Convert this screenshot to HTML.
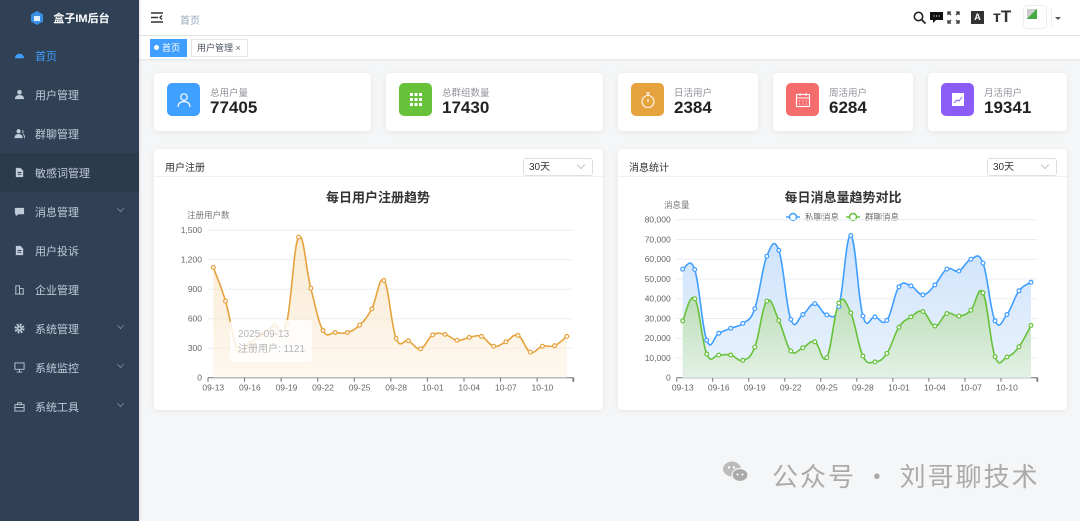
<!DOCTYPE html>
<html><head><meta charset="utf-8">
<style>
*{box-sizing:border-box;margin:0;padding:0}
body{width:1080px;height:521px;overflow:hidden;font-family:"Liberation Sans","Noto Sans CJK SC",sans-serif;background:#f5f6f7;position:relative}
.side{position:absolute;left:0;top:0;width:139px;height:521px;background:#304156;color:#bfcbd9;font-size:11px}
.logo{height:36px;display:flex;align-items:center;justify-content:center;color:#fff;font-weight:bold;font-size:11px;gap:8px}
.item{position:absolute;left:0;width:139px;height:39px;display:flex;align-items:center;padding-left:14px}
.item svg{width:11px;height:11px;margin-right:10px}
.item .ar{position:absolute;right:15px;top:13px;width:7px;height:7px;border-right:1px solid #8a97a8;border-bottom:1px solid #8a97a8;transform:rotate(45deg) scale(.7)}
.top{position:absolute;left:139px;top:0;right:0;height:36px;background:#fff;border-bottom:1px solid #e6e6e6}
.tags{position:absolute;left:139px;top:36px;right:0;height:23px;background:#fff;box-shadow:0 1px 3px rgba(0,0,0,.08)}
.card{position:absolute;top:73px;height:58px;background:#fff;border-radius:4px;box-shadow:0 1px 6px rgba(0,0,0,.07)}
.card .ic{position:absolute;left:13px;top:10px;width:33px;height:33px;border-radius:5px;display:flex;align-items:center;justify-content:center}
.card .lb{position:absolute;left:56px;top:12px;font-size:9.5px;color:#909399}
.card .v{position:absolute;left:56px;top:25px;font-size:17px;font-weight:bold;color:#222}
.panel{position:absolute;top:149px;width:449px;height:261px;background:#fff;border-radius:4px;box-shadow:0 1px 6px rgba(0,0,0,.07)}
.ph{height:28px;border-bottom:1px solid #f0f0f0;font-size:10px;color:#333;padding:10px 0 0 11px}
.sel{position:absolute;top:9px;width:70px;height:18px;border:1px solid #dcdfe6;border-radius:3px;font-size:10px;color:#333;padding:1px 0 0 5px;line-height:15px}
.sel:after{content:"";position:absolute;right:8px;top:3px;width:5px;height:5px;border-right:1px solid #c0c4cc;border-bottom:1px solid #c0c4cc;transform:rotate(45deg)}
svg text{font-family:"Liberation Sans","Noto Sans CJK SC",sans-serif}
</style></head><body>
<div class="side">
 <div class="logo"><svg width="16" height="16" viewBox="0 0 16 16"><path d="M8 1L14 4.5V11.5L8 15L2 11.5V4.5Z" fill="#3a8ee6"/><path d="M5 6h6v5H5z" fill="#fff" opacity=".85"/></svg>盒子IM后台</div>
 <div class="item" style="top:36px;color:#409eff"><svg viewBox="0 0 12 12"><path d="M1 9a5 5 0 0 1 10 0z" fill="#409eff"/></svg>首页</div>
 <div class="item" style="top:75px"><svg viewBox="0 0 12 12"><circle cx="6" cy="3.5" r="2.5" fill="#bfcbd9"/><path d="M1 11c0-3 2-4.5 5-4.5s5 1.5 5 4.5z" fill="#bfcbd9"/></svg>用户管理</div>
 <div class="item" style="top:114px"><svg viewBox="0 0 12 12"><circle cx="5" cy="3.5" r="2.3" fill="#bfcbd9"/><path d="M0.5 11c0-3 2-4.5 4.5-4.5s4.5 1.5 4.5 4.5z" fill="#bfcbd9"/><path d="M9 2.5a2 2 0 0 1 0 3.5M10 7c1 .5 1.5 2 1.5 4" stroke="#bfcbd9" fill="none"/></svg>群聊管理</div>
 <div class="item" style="top:153px;background:#2b3a4d"><svg viewBox="0 0 12 12"><path d="M2 1h5l3 3v7H2z" fill="#bfcbd9"/><path d="M4 6h4M4 8h4" stroke="#2b3a4d"/></svg>敏感词管理</div>
 <div class="item" style="top:192px"><svg viewBox="0 0 12 12"><path d="M1 2h10v7H5l-3 2V9H1z" fill="#bfcbd9"/></svg>消息管理<span class="ar"></span></div>
 <div class="item" style="top:231px"><svg viewBox="0 0 12 12"><path d="M2 1h5l3 3v7H2z" fill="#bfcbd9"/><path d="M4 6h4M4 8h4" stroke="#304156"/></svg>用户投诉</div>
 <div class="item" style="top:270px"><svg viewBox="0 0 12 12"><path d="M2 11V2h4v9M6 5h4v6M1 11h10" stroke="#bfcbd9" fill="none"/></svg>企业管理</div>
 <div class="item" style="top:309px"><svg viewBox="0 0 12 12"><circle cx="6" cy="6" r="4.3" fill="none" stroke="#bfcbd9" stroke-width="2.4" stroke-dasharray="2 1.4"/><circle cx="6" cy="6" r="3" fill="#bfcbd9"/><circle cx="6" cy="6" r="1.2" fill="#304156"/></svg>系统管理<span class="ar"></span></div>
 <div class="item" style="top:348px"><svg viewBox="0 0 12 12"><path d="M1 1h10v7H1zM6 8v3M3 11h6" stroke="#bfcbd9" fill="none"/></svg>系统监控<span class="ar"></span></div>
 <div class="item" style="top:387px"><svg viewBox="0 0 12 12"><path d="M1 4h10v7H1zM4 4V2h4v2M1 7h10" stroke="#bfcbd9" fill="none"/></svg>系统工具<span class="ar"></span></div>
</div>
<div class="top">
 <svg style="position:absolute;left:12px;top:12px" width="12" height="11" viewBox="0 0 12 11"><path d="M0 1h12M0 5.5h7M0 10h12M11 3.5l-2 2 2 2" stroke="#333" stroke-width="1.4" fill="none"/></svg>
 <span style="position:absolute;left:41px;top:12px;font-size:10px;color:#97a8be">首页</span>
 <svg style="position:absolute;left:774px;top:11px" width="14" height="14" viewBox="0 0 14 14"><circle cx="5.5" cy="5.5" r="4.2" stroke="#222" stroke-width="1.6" fill="none"/><path d="M8.5 8.5l4 4" stroke="#222" stroke-width="1.8"/></svg>
 <svg style="position:absolute;left:791px;top:11px" width="13" height="13" viewBox="0 0 13 13"><path d="M0 1h13v8H6l-3 3V9H0z" fill="#111"/><path d="M3.5 5h1M6 5h1M8.5 5h1" stroke="#fff"/></svg>
 <svg style="position:absolute;left:808px;top:11px" width="13" height="13" viewBox="0 0 13 13"><path d="M1 4V1h3M9 1h3v3M12 9v3H9M4 12H1V9M1 1l3 3M12 1L9 4M12 12L9 9M1 12l3-3" stroke="#333" stroke-width="1.3" fill="none"/></svg>
 <div style="position:absolute;left:832px;top:11px;width:13px;height:13px;background:#333;color:#fff;font-size:9px;font-weight:bold;line-height:13px;text-align:center">A</div>
 <span style="position:absolute;left:854px;top:7px;font-size:16px;color:#333;font-weight:bold">т<span style="font-size:17px">T</span></span>
 <div style="position:absolute;left:884px;top:5px;width:24px;height:24px;border:1px solid #eee;border-radius:4px;background:#fff"><div style="margin:3px 0 0 3px;width:10px;height:10px;background:linear-gradient(135deg,#ccc 50%,#4a4 50%)"></div></div>
 <span style="position:absolute;left:912px;top:8px;width:1px;height:18px;background:#eee"></span>
 <span style="position:absolute;left:916px;top:17px;border:3px solid transparent;border-top:3px solid #555"></span>
</div>
<div class="tags">
 <div style="position:absolute;left:11px;top:3px;width:37px;height:18px;background:#409eff;color:#fff;font-size:9px;line-height:18px;padding-left:4px"><span style="display:inline-block;width:5px;height:5px;border-radius:50%;background:#fff;margin-right:3px;vertical-align:1px"></span>首页</div>
 <div style="position:absolute;left:52px;top:3px;width:57px;height:18px;border:1px solid #e4e6eb;color:#495060;font-size:9px;line-height:16px;padding-left:5px">用户管理 <span style="color:#666">×</span></div>
</div>
<div style="position:absolute;left:139px;top:0;width:3px;height:521px;background:linear-gradient(90deg,rgba(0,0,0,.08),transparent)"></div>

<div class="card" style="left:154px;width:217px"><div class="ic" style="background:#40a0ff"><svg width="16" height="16" viewBox="0 0 16 16" fill="none" stroke="#fff" stroke-width="1.2"><circle cx="8" cy="5" r="3.2"/><path d="M2 15c0-3.5 2.5-5.5 6-5.5s6 2 6 5.5"/></svg></div><div class="lb">总用户量</div><div class="v">77405</div></div>
<div class="card" style="left:386px;width:217px"><div class="ic" style="background:#67c23a"><svg width="14" height="16" viewBox="0 0 14 16" fill="#fff"><rect x="1" y="1" width="3" height="3"/><rect x="5.5" y="1" width="3" height="3"/><rect x="10" y="1" width="3" height="3"/><rect x="1" y="6" width="3" height="3"/><rect x="5.5" y="6" width="3" height="3"/><rect x="10" y="6" width="3" height="3"/><rect x="1" y="11" width="3" height="3"/><rect x="5.5" y="11" width="3" height="3"/><rect x="10" y="11" width="3" height="3"/></svg></div><div class="lb">总群组数量</div><div class="v">17430</div></div>
<div class="card" style="left:618px;width:140px"><div class="ic" style="background:#e6a23c"><svg width="16" height="18" viewBox="0 0 16 18" fill="none" stroke="#fff" stroke-width="1.1"><circle cx="8" cy="10.5" r="6"/><path d="M6 2h4M8 2v2.5M8 8v3"/></svg></div><div class="lb">日活用户</div><div class="v">2384</div></div>
<div class="card" style="left:773px;width:140px"><div class="ic" style="background:#f56c6c"><svg width="16" height="16" viewBox="0 0 16 16" fill="none" stroke="#fff" stroke-width="1.1"><rect x="1.5" y="2.5" width="13" height="12"/><path d="M1.5 6h13M5 1v3M11 1v3M4 9h1M7.5 9h1M11 9h1M4 12h1M7.5 12h1M11 12h1"/></svg></div><div class="lb">周活用户</div><div class="v">6284</div></div>
<div class="card" style="left:928px;width:139px"><div class="ic" style="background:#8b5cf6"><svg width="14" height="15" viewBox="0 0 14 15"><rect x="1" y="1" width="12" height="13" fill="#fff"/><path d="M3 11l3-3 2 1 3-4" stroke="#8b5cf6" fill="none"/></svg></div><div class="lb">月活用户</div><div class="v">19341</div></div>

<div class="panel" style="left:154px"><div class="ph">用户注册</div><div class="sel" style="left:369px">30天</div></div>
<div class="panel" style="left:618px"><div class="ph">消息统计</div><div class="sel" style="left:369px">30天</div></div>

<svg id="ch" style="position:absolute;left:0;top:0" width="1080" height="521">
<defs>
<linearGradient id="go" x1="0" y1="0" x2="0" y2="1"><stop offset="0" stop-color="#f5d9a8" stop-opacity=".5"/><stop offset="1" stop-color="#fdf3e6" stop-opacity=".6"/></linearGradient>
<linearGradient id="gb" x1="0" y1="0" x2="0" y2="1"><stop offset="0" stop-color="#cfe3fb"/><stop offset="1" stop-color="#e8f2fd"/></linearGradient>
<linearGradient id="gg" x1="0" y1="0" x2="0" y2="1"><stop offset="0" stop-color="#b9dcb3"/><stop offset="1" stop-color="#e3f1e6"/></linearGradient>
</defs>
<text x="378" y="202" font-size="13" font-weight="bold" fill="#333" text-anchor="middle">每日用户注册趋势</text>
<text x="187" y="218" font-size="8.5" fill="#777">注册用户数</text>
<text x="843" y="202" font-size="13" font-weight="bold" fill="#333" text-anchor="middle">每日消息量趋势对比</text>
<text x="664" y="208" font-size="8.5" fill="#777">消息量</text>
<g font-size="8.5" fill="#666">
<path d="M786 217h14" stroke="#409eff" stroke-width="1.5"/><circle cx="793" cy="217" r="3.5" fill="#fff" stroke="#409eff" stroke-width="1.5"/><text x="805" y="220">私聊消息</text>
<path d="M846 217h14" stroke="#67c23a" stroke-width="1.5"/><circle cx="853" cy="217" r="3.5" fill="#fff" stroke="#67c23a" stroke-width="1.5"/><text x="865" y="220">群聊消息</text>
</g>
<g id="g1"></g><g id="g2"></g>
<g>
<rect x="230" y="320" width="82" height="42" rx="3" fill="#fff" fill-opacity=".82"/>
<text x="238" y="337" font-size="10" fill="#b5b5b5">2025-09-13</text>
<text x="238" y="352" font-size="10" fill="#b5b5b5">注册用户: 1121</text>
</g>
</svg>
<svg style="position:absolute;left:722px;top:460px" width="28" height="24" viewBox="0 0 28 24"><ellipse cx="10" cy="9" rx="9" ry="7.5" fill="#bbb"/><ellipse cx="18" cy="15" rx="8" ry="6.5" fill="#aaa" stroke="#f5f6f7" stroke-width="1.2"/><circle cx="7" cy="7.5" r="1.2" fill="#fff"/><circle cx="12" cy="7.5" r="1.2" fill="#fff"/><circle cx="15.5" cy="14.5" r="1" fill="#fff"/><circle cx="20.5" cy="14.5" r="1" fill="#fff"/></svg>
<div style="position:absolute;left:772px;top:459px;font-size:26px;line-height:34px;color:#aaa;letter-spacing:2px;white-space:nowrap;font-family:'Noto Sans CJK SC',sans-serif">公众号 · 刘哥聊技术</div>

<script>
var NS="http://www.w3.org/2000/svg";
function el(g,t,a,txt){var e=document.createElementNS(NS,t);for(var k in a)e.setAttribute(k,a[k]);if(txt!=null)e.textContent=txt;g.appendChild(e);return e;}
function curve(p){var d="M"+p[0][0]+" "+p[0][1];for(var i=0;i<p.length-1;i++){var p0=p[i-1]||p[i],p1=p[i],p2=p[i+1],p3=p[i+2]||p2,t=0.2;
var c1x=p1[0]+(p2[0]-p0[0])*t,c1y=p1[1]+(p2[1]-p0[1])*t,c2x=p2[0]-(p3[0]-p1[0])*t,c2y=p2[1]-(p3[1]-p1[1])*t;
d+="C"+c1x.toFixed(1)+" "+c1y.toFixed(1)+" "+c2x.toFixed(1)+" "+c2y.toFixed(1)+" "+p2[0]+" "+p2[1];}return d;}
var labs=["09-13","09-16","09-19","09-22","09-25","09-28","10-01","10-04","10-07","10-10"];
function chart(g,o){
 var y0=377.7;
 for(var i=0;i<=o.n;i++){var y=y0-i*o.step;if(i>0)el(g,"line",{x1:o.ax0,x2:o.ax1,y1:y,y2:y,stroke:"#e8edf5","stroke-width":1});
  el(g,"text",{x:o.ax0-6,y:y+3,"font-size":8.5,fill:"#666","text-anchor":"end"},o.fmt(i));}
 el(g,"line",{x1:o.ax0,x2:o.ax1,y1:y0,y2:y0,stroke:"#6e7079","stroke-width":1});
 for(var k=0;k<=10;k++){var tx=o.ax0+k*3*o.dx;el(g,"line",{x1:tx,x2:tx,y1:y0,y2:y0+4,stroke:"#6e7079"});}
 el(g,"line",{x1:o.ax1,x2:o.ax1,y1:y0,y2:y0+4,stroke:"#6e7079"});
 for(var k=0;k<10;k++)el(g,"text",{x:o.x0+k*3*o.dx,y:y0+13,"font-size":8.5,fill:"#666","text-anchor":"middle"},labs[k]);
 o.series.forEach(function(s){var pts=s.d.map(function(v,i){return[+(o.x0+i*o.dx).toFixed(1),+(y0-v*o.sc).toFixed(1)];});
  var c=curve(pts);el(g,"path",{d:c+"L"+pts[pts.length-1][0]+" "+y0+"L"+pts[0][0]+" "+y0+"Z",fill:s.f});
  el(g,"path",{d:c,fill:"none",stroke:s.c,"stroke-width":1.6});
  s.pts=pts;});
 o.series.forEach(function(s){s.pts.forEach(function(p){el(g,"circle",{cx:p[0],cy:p[1],r:1.9,fill:"#fff",stroke:s.c,"stroke-width":1.2});});});
}
chart(document.getElementById("g1"),{ax0:208,ax1:573,x0:213.3,dx:12.19,n:5,step:29.5,sc:29.5/300,fmt:function(i){return ["0","300","600","900","1,200","1,500"][i];},
 series:[{c:"#e6a23c",f:"url(#go)",d:[1121,780,290,350,440,530,545,1430,910,480,460,460,535,700,990,400,375,295,435,440,380,410,420,320,365,430,260,320,325,420]}]});
chart(document.getElementById("g2"),{ax0:676.7,ax1:1037.7,x0:682.7,dx:12.01,n:8,step:19.75,sc:19.75/10000,fmt:function(i){return i==0?"0":(i*10)+",000";},
 series:[{c:"#409eff",f:"url(#gb)",d:[55000,54800,19000,22500,25000,27500,35000,61500,64500,29500,32000,37500,31800,36000,72000,31200,30800,29000,46000,46500,42000,47000,55000,54000,60000,58000,28800,32000,44000,48300]},
 {c:"#67c23a",f:"url(#gg)",d:[28800,40000,12000,11500,11500,8800,15500,38800,29000,13500,15200,18200,10200,37800,32800,11000,8000,12300,25500,30800,33500,26200,32500,31200,34200,43000,10700,10500,15700,26500]}]});
</script>
</body></html>
